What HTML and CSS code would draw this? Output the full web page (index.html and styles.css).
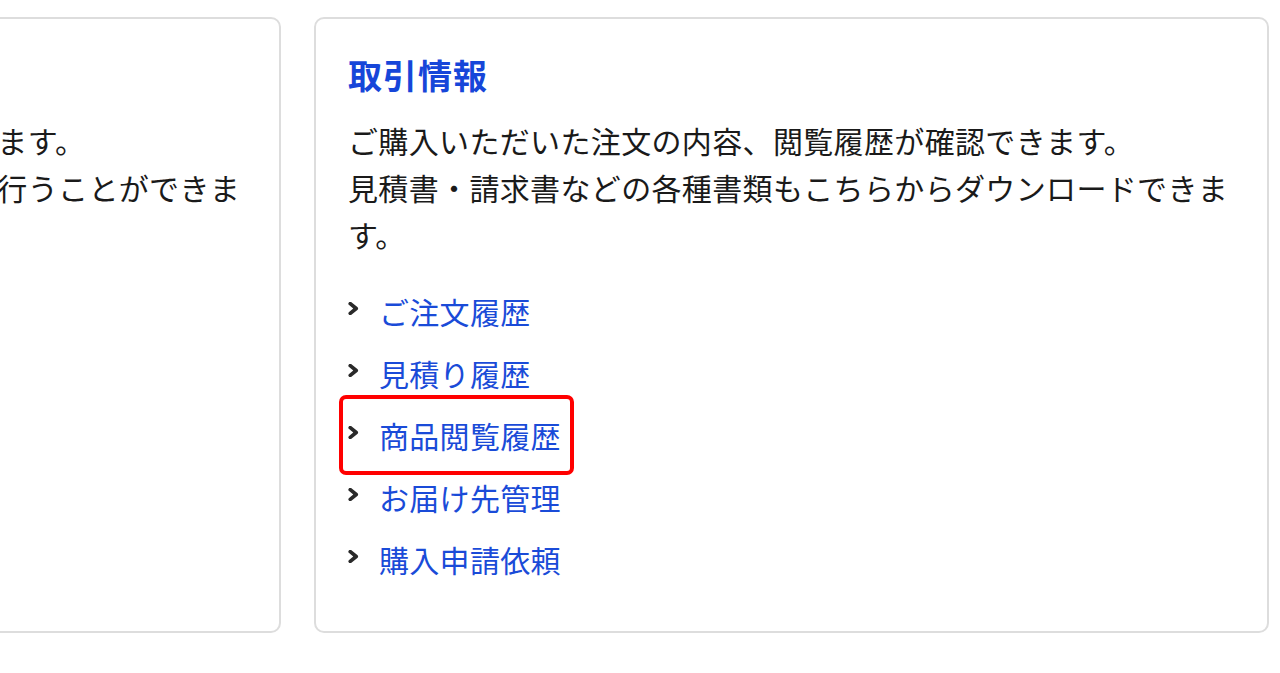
FILE: index.html
```html
<!DOCTYPE html>
<html lang="ja">
<head>
<meta charset="utf-8">
<title>マイページ</title>
<link rel="stylesheet" href="styles.css">
</head>
<body>
<div class="cards">
  <section class="card">
    <h2 class="card-title">会員情報</h2>
    <p class="card-text">会員様のご登録情報の確認・修正・変更ができます。<br>パスワード変更やメールマガジンの配信設定を行うことができます。</p>
    <ul class="links">
      <li class="link-item"><svg class="chev" viewBox="0 0 10 12"><polyline points="2,1.5 7.5,6 2,10.5"/></svg><a href="#">会員情報の変更</a></li>
      <li class="link-item"><svg class="chev" viewBox="0 0 10 12"><polyline points="2,1.5 7.5,6 2,10.5"/></svg><a href="#">パスワード変更</a></li>
    </ul>
  </section>
  <section class="card">
    <h2 class="card-title">取引情報</h2>
    <p class="card-text">ご購入いただいた注文の内容、閲覧履歴が確認できます。<br>見積書・請求書などの各種書類もこちらからダウンロードできます。</p>
    <ul class="links">
      <li class="link-item"><svg class="chev" viewBox="0 0 10 12"><polyline points="2,1.5 7.5,6 2,10.5"/></svg><a href="#">ご注文履歴</a></li>
      <li class="link-item"><svg class="chev" viewBox="0 0 10 12"><polyline points="2,1.5 7.5,6 2,10.5"/></svg><a href="#">見積り履歴</a></li>
      <li class="link-item"><svg class="chev" viewBox="0 0 10 12"><polyline points="2,1.5 7.5,6 2,10.5"/></svg><a href="#">商品閲覧履歴</a><span class="highlight"></span></li>
      <li class="link-item"><svg class="chev" viewBox="0 0 10 12"><polyline points="2,1.5 7.5,6 2,10.5"/></svg><a href="#">お届け先管理</a></li>
      <li class="link-item"><svg class="chev" viewBox="0 0 10 12"><polyline points="2,1.5 7.5,6 2,10.5"/></svg><a href="#">購入申請依頼</a></li>
    </ul>
  </section>
</div>
</body>
</html>
```
FILE: styles.css
```css
html, body {
  margin: 0;
  padding: 0;
  background: #ffffff;
}
body {
  font-family: "Noto Sans CJK JP", "Noto Sans", sans-serif;
  color: #222222;
  overflow: hidden;
}
.cards {
  display: flex;
  gap: 33px;
  margin-left: -674px;
  padding-top: 17px;
}
.card {
  flex: 0 0 955px;
  box-sizing: border-box;
  width: 955px;
  height: 616px;
  border: 2px solid #dddddd;
  border-radius: 10px;
  padding: 32px 32px 32px;
}
.card-title {
  margin: 0 0 19px;
  font-size: 34px;
  line-height: 47px;
  font-weight: 700;
  letter-spacing: 1px;
  color: #1646d9;
}
.card-text {
  margin: 0 0 22px;
  font-size: 30px;
  line-height: 47px;
  letter-spacing: 0.35px;
  color: #1a1a1a;
}
.links {
  list-style: none;
  margin: 0;
  padding: 0;
}
.link-item {
  position: relative;
  display: flex;
  align-items: center;
  height: 62px;
  font-size: 30px;
  letter-spacing: 0.3px;
}
.chev {
  width: 11px;
  height: 13px;
  margin-left: 0px;
  margin-right: 20px;
  margin-top: -5px;
  fill: none;
  stroke: #2a2a2a;
  stroke-width: 3.4;
  stroke-linecap: round;
  stroke-linejoin: round;
}
.link-item a {
  color: #1a4bd8;
  text-decoration: none;
}
.highlight {
  position: absolute;
  left: -9px;
  top: 0px;
  width: 235px;
  height: 80px;
  box-sizing: border-box;
  border: 4px solid #ff0000;
  border-radius: 7px;
  margin-top: -9px;
}
```
